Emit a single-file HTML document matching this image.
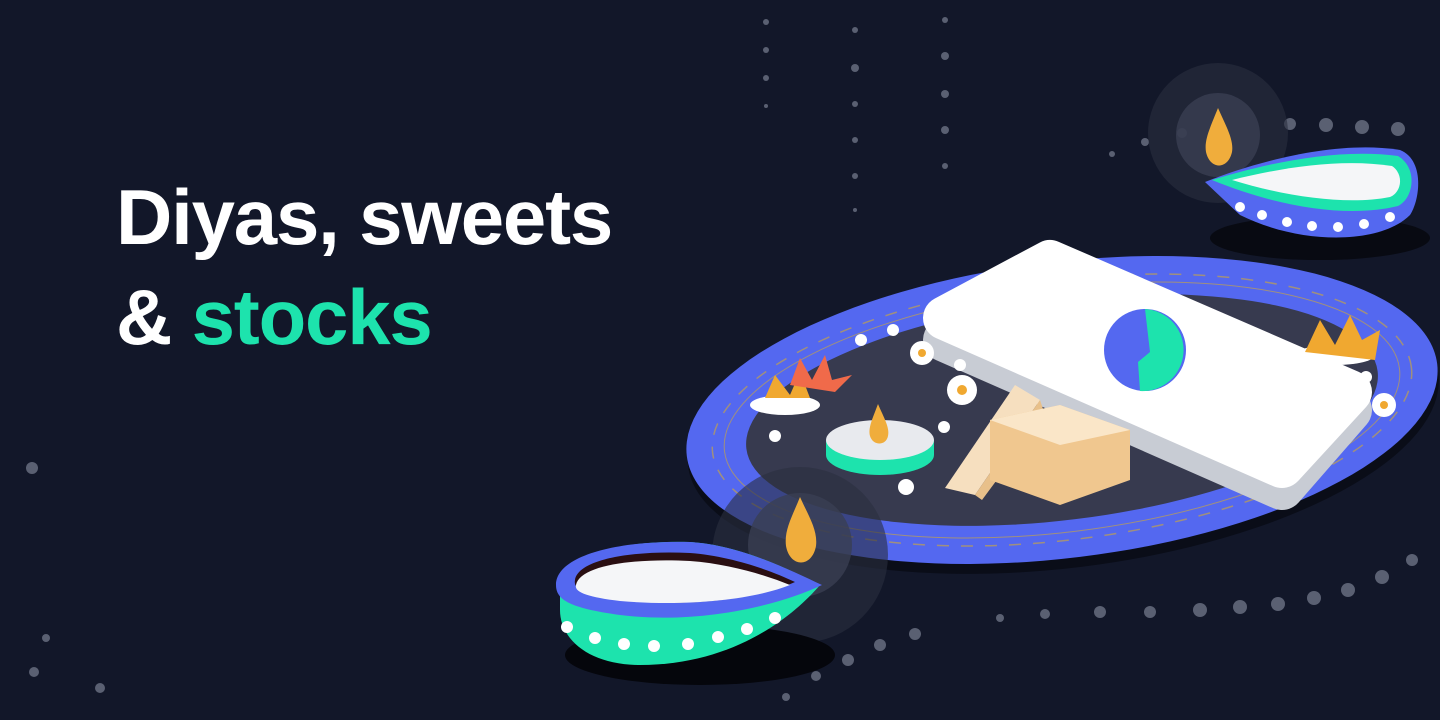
<!DOCTYPE html>
<html><head><meta charset="utf-8"><style>
html,body{margin:0;padding:0;background:#121729;width:1440px;height:720px;overflow:hidden}
.t{position:absolute;left:116px;font-family:"Liberation Sans",sans-serif;font-weight:bold;font-size:78px;letter-spacing:-1.2px;color:#fff;line-height:1}
</style></head><body>
<svg width="1440" height="720" style="position:absolute;left:0;top:0">
<g fill="#5a6072">
<circle cx="32" cy="468" r="6"/><circle cx="46" cy="638" r="4"/><circle cx="34" cy="672" r="5"/><circle cx="100" cy="688" r="5"/>
<circle cx="766" cy="22" r="3"/><circle cx="766" cy="50" r="3"/><circle cx="766" cy="78" r="3"/><circle cx="766" cy="106" r="2"/>
<circle cx="855" cy="30" r="3"/><circle cx="855" cy="68" r="4"/><circle cx="855" cy="104" r="3"/><circle cx="855" cy="140" r="3"/><circle cx="855" cy="176" r="3"/><circle cx="855" cy="210" r="2"/>
<circle cx="945" cy="20" r="3"/><circle cx="945" cy="56" r="4"/><circle cx="945" cy="94" r="4"/><circle cx="945" cy="130" r="4"/><circle cx="945" cy="166" r="3"/>
<circle cx="1112" cy="154" r="3"/><circle cx="1145" cy="142" r="4"/><circle cx="1182" cy="133" r="5"/><circle cx="1290" cy="124" r="6"/><circle cx="1326" cy="125" r="7"/><circle cx="1362" cy="127" r="7"/><circle cx="1398" cy="129" r="7"/>
<circle cx="786" cy="697" r="4"/><circle cx="816" cy="676" r="5"/><circle cx="848" cy="660" r="6"/><circle cx="880" cy="645" r="6"/><circle cx="915" cy="634" r="6"/>
<circle cx="1000" cy="618" r="4"/><circle cx="1045" cy="614" r="5"/><circle cx="1100" cy="612" r="6"/><circle cx="1150" cy="612" r="6"/><circle cx="1200" cy="610" r="7"/><circle cx="1240" cy="607" r="7"/><circle cx="1278" cy="604" r="7"/><circle cx="1314" cy="598" r="7"/><circle cx="1348" cy="590" r="7"/><circle cx="1382" cy="577" r="7"/><circle cx="1412" cy="560" r="6"/>
</g>
<g transform="rotate(-7 1062 410)">
<ellipse cx="1062" cy="420" rx="378" ry="148" fill="#0a0d18"/>
<ellipse cx="1062" cy="410" rx="378" ry="148" fill="#5468f0"/>
<ellipse cx="1062" cy="410" rx="352" ry="130" fill="none" stroke="#a0907e" stroke-width="1.5" stroke-dasharray="12 12"/>
<ellipse cx="1062" cy="410" rx="340" ry="122" fill="none" stroke="#a0907e" stroke-width="1"/>
<ellipse cx="1062" cy="410" rx="318" ry="110" fill="#373a4f"/>
</g>
<path d="M945 330 L1050 262 L1350 400 L1282 478 Z" fill="#c8ccd4" stroke="#c8ccd4" stroke-width="44" stroke-linejoin="round" transform="translate(0,10)"/>
<path d="M945 318 L1050 262 L1350 392 L1282 466 Z" fill="#fff" stroke="#fff" stroke-width="44" stroke-linejoin="round"/>
<circle cx="1145" cy="350" r="41" fill="#5468f0"/>
<path d="M1145 309 A41 41 0 0 1 1140 391 L1138 362 L1150 352 Z" fill="#1de3ad"/>
<polygon points="945,488 1015,385 1040,400 975,495" fill="#f6dfbf"/>
<polygon points="975,495 1040,400 1045,415 982,500" fill="#e8c08a"/>
<polygon points="990,420 1060,405 1130,430 1130,480 1060,505 990,480" fill="#f0c78f"/>
<polygon points="990,420 1060,405 1130,430 1060,445" fill="#fae6c8"/>
<ellipse cx="880" cy="455" rx="54" ry="20" fill="#1de3ad"/>
<rect x="826" y="440" width="108" height="15" fill="#1de3ad"/>
<ellipse cx="880" cy="440" rx="54" ry="20" fill="#e8eaee"/>
<path d="M878 404 C872 420 868 428 870 436 C873 446 886 446 888 436 C890 428 884 418 878 404Z" fill="#f0ad3c"/>
<g fill="#fff">
<circle cx="922" cy="353" r="12"/><circle cx="962" cy="390" r="15"/><circle cx="1384" cy="405" r="12"/><circle cx="906" cy="487" r="8"/><circle cx="944" cy="427" r="6"/><circle cx="775" cy="436" r="6"/><circle cx="893" cy="330" r="6"/><circle cx="861" cy="340" r="6"/><circle cx="960" cy="365" r="6"/><circle cx="1366" cy="377" r="6"/>
<ellipse cx="785" cy="405" rx="35" ry="10"/><ellipse cx="1335" cy="355" rx="40" ry="10"/>
</g>
<g fill="#f0a830"><circle cx="922" cy="353" r="4"/><circle cx="962" cy="390" r="5"/><circle cx="1384" cy="405" r="4"/>
<path d="M765 398 L775 375 L790 395 L800 372 L810 398Z"/><path d="M1305 352 L1320 320 L1335 345 L1350 315 L1362 340 L1380 330 L1375 360Z"/></g>
<path d="M790 385 L800 358 L812 380 L825 355 L832 380 L852 375 L835 392Z" fill="#f06a4a"/>
<circle cx="1218" cy="133" r="70" fill="#2a2f40" opacity=".6"/><circle cx="1218" cy="135" r="42" fill="#3a3f52" opacity=".8"/>
<ellipse cx="1320" cy="238" rx="110" ry="22" fill="#080a12"/>
<path d="M1205 182 C1260 160 1340 140 1400 150 C1425 160 1420 200 1410 215 C1380 245 1300 245 1240 215 Z" fill="#5468f0"/>
<path d="M1212 180 C1270 162 1340 148 1398 156 C1418 168 1414 198 1398 206 C1350 218 1280 208 1212 180Z" fill="#1de3ad"/>
<path d="M1232 180 C1280 168 1340 158 1392 166 C1404 174 1402 192 1390 197 C1350 205 1290 198 1232 180Z" fill="#f5f6f8"/>
<g fill="#fff"><circle cx="1240" cy="207" r="5"/><circle cx="1262" cy="215" r="5"/><circle cx="1287" cy="222" r="5"/><circle cx="1312" cy="226" r="5"/><circle cx="1338" cy="227" r="5"/><circle cx="1364" cy="224" r="5"/><circle cx="1390" cy="217" r="5"/></g>
<path d="M1218 108 C1210 128 1204 140 1206 152 C1210 170 1228 170 1232 152 C1234 140 1226 126 1218 108Z" fill="#f0ad3c"/>
<circle cx="800" cy="555" r="88" fill="#2a2f40" opacity=".6"/><circle cx="800" cy="545" r="52" fill="#3a3f52" opacity=".8"/>
<ellipse cx="700" cy="655" rx="135" ry="30" fill="#05060c"/>
<path d="M560 590 C560 555 620 540 690 542 C740 545 790 570 820 585 C790 620 730 665 640 665 C590 665 560 640 560 610Z" fill="#1de3ad"/>
<path d="M556 585 C556 555 620 540 690 542 C740 545 790 570 822 585 C780 605 700 625 620 615 C570 608 556 600 556 585Z" fill="#5468f0"/>
<path d="M575 580 C578 560 630 550 690 553 C730 556 770 570 795 582 C760 598 690 608 620 600 C585 595 573 590 575 580Z" fill="#2a0f12"/>
<path d="M576 585 C580 566 630 558 690 561 C730 564 765 575 790 585 C755 599 690 607 620 601 C587 597 574 592 576 585Z" fill="#f5f6f8"/>
<g fill="#fff"><circle cx="567" cy="627" r="6"/><circle cx="595" cy="638" r="6"/><circle cx="624" cy="644" r="6"/><circle cx="654" cy="646" r="6"/><circle cx="688" cy="644" r="6"/><circle cx="718" cy="637" r="6"/><circle cx="747" cy="629" r="6"/><circle cx="775" cy="618" r="6"/></g>
<path d="M800 497 C792 517 784 530 786 546 C790 568 812 568 816 546 C818 530 808 515 800 497Z" fill="#f0ad3c"/>
</svg>
<div class="t" style="top:178px">Diyas, sweets</div>
<div class="t" style="top:278px">&amp; <span style="color:#1de3ad">stocks</span></div>
</body></html>
